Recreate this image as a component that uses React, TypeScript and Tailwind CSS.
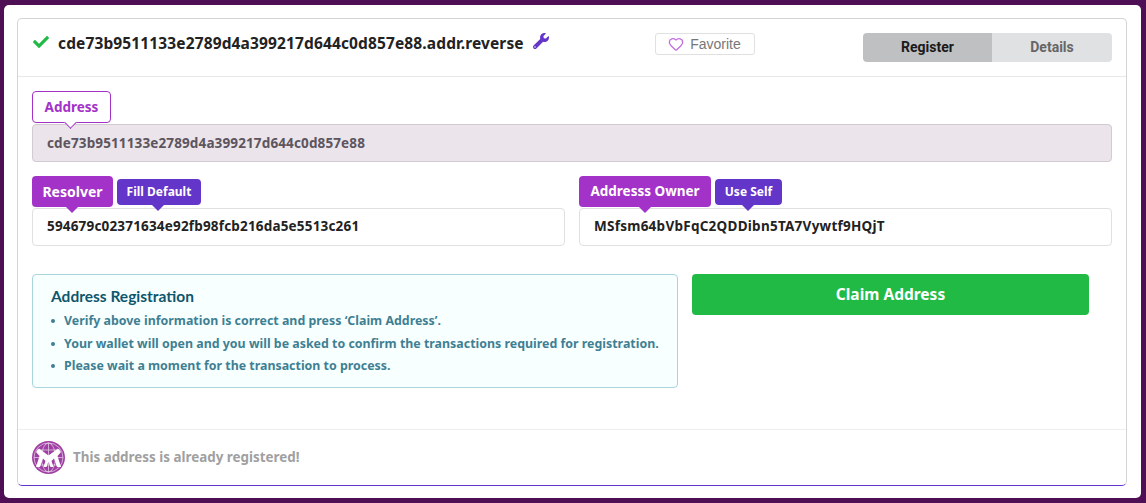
import { FaCheck, FaWrench } from "react-icons/fa";
import { Heart } from "lucide-react";

const ubuntuish = "font-['Noto_Sans','Open_Sans',sans-serif]";

function Logo() {
  return (
    <svg width="33" height="33" viewBox="0 0 33 33" className="shrink-0">
      <circle cx="16.5" cy="16.5" r="16.5" fill="#a03fa3" />
      <g fill="none" stroke="#fff" strokeWidth="0.7" opacity="0.8">
        <circle cx="16.5" cy="16.5" r="14.5" />
        <ellipse cx="16.5" cy="16.5" rx="7" ry="14.5" />
        <path d="M16.5 2v29M2 16.5h29M4.500 9h24M4.500 24h24" />
      </g>
      <path d="M4 11l3-3.500 9.500 7 9.500-7 3 3.500-3.500 4 3.500 11h-4l-3-8.500-2.500 2.500 2 6h-3l-2-5.500-2 5.500h-3l2-6-2.500-2.500-3 8.500H4l3.500-11z" fill="#fff" />
    </svg>
  );
}

function Caret({ color, left }: { color: string; left: string }) {
  return (
    <span
      className={`absolute -bottom-[6px] ${left} h-0 w-0 -translate-x-1/2 border-x-[6px] border-t-[6px] border-x-transparent ${color}`}
    />
  );
}

export default function App() {
  return (
    <div className="h-[503px] w-[1146px] overflow-hidden bg-[#4f0f55] pb-[5px] pl-[4px] pr-[5px] pt-[5px]">
      <div className="h-[493px] rounded-[5px] bg-white pl-[13px] pr-[14px] pt-[13px]">
        <div className={`flex h-[468px] flex-col rounded-[5px] border border-[#d4d4d5] border-b-[#6435c9] bg-white ${ubuntuish}`}>
          {/* header */}
          <div className="relative flex h-[58px] items-start border-b border-[#e8e8e9] pl-[15px]">
            <FaCheck className="mt-[15px] text-[16px] text-[#21ba45]" />
            <span className="ml-[9px] mt-[13px] text-[15.5px] font-bold leading-[22px] tracking-[0.13px] text-[#222]">
              cde73b9511133e2789d4a399217d644c0d857e88.addr.reverse
            </span>
            <FaWrench className="ml-[9px] mt-[14px] text-[16px] text-[#6435c9]" />
            <div className="absolute left-[637px] top-[14px] flex h-[22px] w-[100px] items-center justify-center gap-[6px] rounded-[3px] border border-[#e0e0e0] pr-[1px] font-['Liberation_Sans',sans-serif] text-[14px] text-[#777]">
              <Heart size={16} strokeWidth={2} className="text-[#c56fe0]" />
              Favorite
            </div>
            <div className="absolute left-[845px] top-[14px] flex h-[29px] w-[249px] overflow-hidden rounded-[4px] font-['Roboto',sans-serif] text-[14px] font-bold">
              <div className="flex w-[129px] items-center justify-center bg-[#bfc0c1] text-[#1a1a1a]">Register</div>
              <div className="flex flex-1 items-center justify-center bg-[#e0e1e2] text-[#666]">Details</div>
            </div>
          </div>

          {/* body */}
          <div className="flex-1 px-[14px] pt-[14px]">
            <div className="relative inline-flex h-[32px] w-[79px] items-center justify-center rounded-[4px] border border-[#a333c8] bg-white pt-px text-[13.5px] font-bold text-[#a333c8]">
              Address
              <span className="absolute -bottom-[5px] left-[33px] h-[9px] w-[9px] rotate-45 border-b border-r border-[#a333c8] bg-white" />
            </div>
            <div className="mt-px flex h-[38px] items-center rounded-[4px] border border-[#cfcbd0] bg-[#ebe4ea] px-[14px] text-[13.5px] font-bold tracking-[0.13px] text-[#5c5560]">
              cde73b9511133e2789d4a399217d644c0d857e88
            </div>

            <div className="mt-[14px] grid grid-cols-2 gap-x-[14px]">
              <div>
                <div className="flex h-[32px] items-start gap-[4px]">
                  <span className="relative flex h-[31px] w-[81px] items-center justify-center rounded-[4px] bg-[#a333c8] text-[14px] font-bold text-white">
                    Resolver
                    <Caret color="border-t-[#a333c8]" left="left-[40px]" />
                  </span>
                  <span className="relative mt-[3px] flex h-[26px] w-[84px] items-center justify-center rounded-[4px] bg-[#6435c9] text-[12px] font-bold text-white">
                    Fill Default
                    <Caret color="border-t-[#6435c9]" left="left-[41px]" />
                  </span>
                </div>
                <div className="flex h-[38px] items-center rounded-[4px] border border-[#e0e0e0] bg-white px-[14px] pb-px text-[13.5px] font-bold tracking-[0.18px] text-[#222]">
                  594679c02371634e92fb98fcb216da5e5513c261
                </div>
              </div>
              <div>
                <div className="flex h-[32px] items-start gap-[4px]">
                  <span className="relative flex h-[31px] w-[132px] items-center justify-center rounded-[4px] bg-[#a333c8] text-[13.5px] font-bold text-white">
                    Addresss Owner
                    <Caret color="border-t-[#a333c8]" left="left-[66px]" />
                  </span>
                  <span className="relative mt-[3px] flex h-[26px] w-[67px] items-center justify-center rounded-[4px] bg-[#6435c9] text-[12px] font-bold text-white">
                    Use Self
                    <Caret color="border-t-[#6435c9]" left="left-[33px]" />
                  </span>
                </div>
                <div className="flex h-[38px] items-center rounded-[4px] border border-[#e0e0e0] bg-white px-[14px] pb-px text-[13.5px] font-bold tracking-[0.26px] text-[#222]">
                  MSfsm64bVbFqC2QDDibn5TA7Vywtf9HQjT
                </div>
              </div>
            </div>

            <div className="mt-[28px] flex items-start">
              <div className="h-[114px] w-[646px] rounded-[4px] border border-[#a9d5de] bg-[#f8ffff] pl-[18px] pt-[11px]">
                <div className="font-['Lato',sans-serif] text-[15.5px] font-bold leading-[20px] text-[#0e566c]">
                  Address Registration
                </div>
                <ul className="mt-[4px] text-[12.4px] font-bold leading-[22.500px] text-[#3f7f93]">
                  <li className="flex items-center"><span className="mr-[9px] h-[4px] w-[4px] rounded-full bg-[#3f7f93]" />Verify above information is correct and press ‘Claim Address’.</li>
                  <li className="flex items-center"><span className="mr-[9px] h-[4px] w-[4px] rounded-full bg-[#3f7f93]" />Your wallet will open and you will be asked to confirm the transactions required for registration.</li>
                  <li className="flex items-center"><span className="mr-[9px] h-[4px] w-[4px] rounded-full bg-[#3f7f93]" />Please wait a moment for the transaction to process.</li>
                </ul>
              </div>
              <button className="ml-[14px] flex h-[41px] w-[397px] items-center justify-center rounded-[4px] bg-[#21ba45] text-[15.5px] font-bold text-white">
                Claim Address
              </button>
            </div>
          </div>

          {/* footer */}
          <div className="flex h-[56px] items-center gap-[8px] border-t border-[#eeeeee] pl-[14px]">
            <Logo />
            <span className="pb-px text-[13.4px] font-bold text-[#a0a0a0]">This address is already registered!</span>
          </div>
        </div>
      </div>
    </div>
  );
}
